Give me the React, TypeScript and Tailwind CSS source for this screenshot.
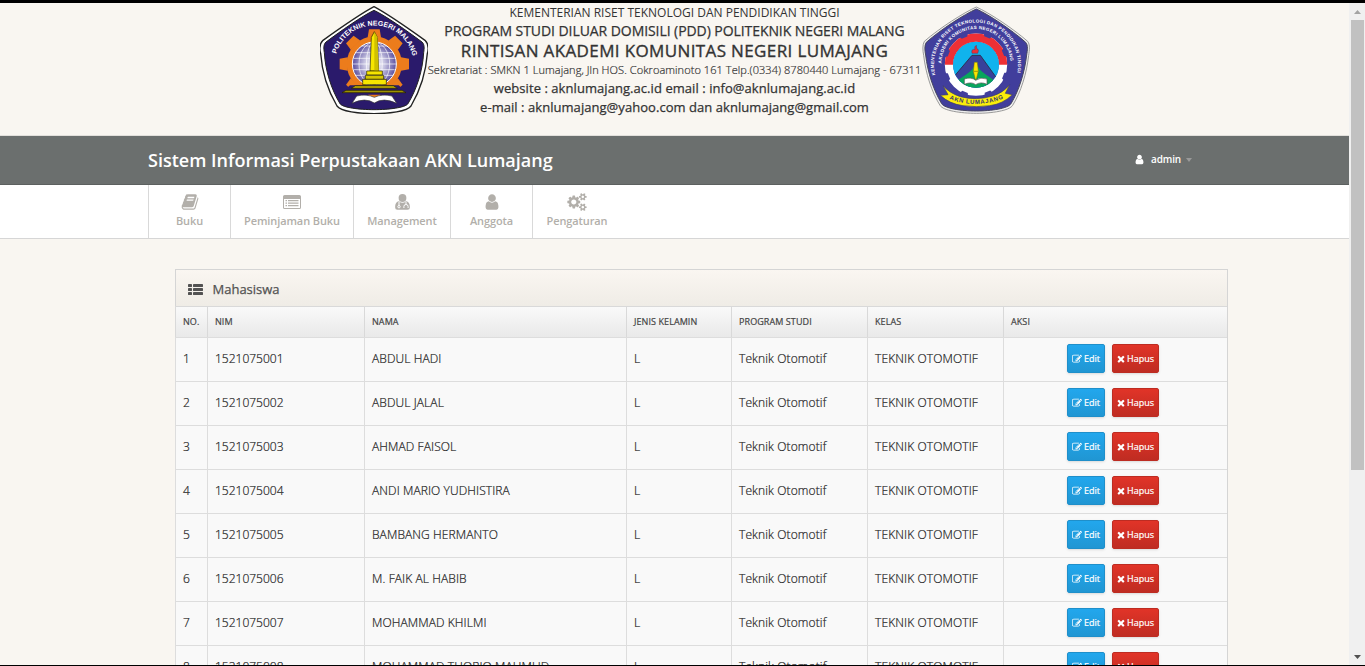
import React from "react";

const toothAngles = [0, 45, 90, 135, 180, 225, 270, 315];

function Glyph({ d, box = "0 0 1792 1792", className }: { d: string; box?: string; className: string }) {
  return (
    <svg viewBox={box} className={className} fill="currentColor" aria-hidden="true">
      <path d={d} />
    </svg>
  );
}

const BOOK =
  "M1703 478q40 57 18 129l-275 906q-19 64-76.5 107.5t-122.5 43.5h-923q-77 0-148.5-53.5t-99.5-131.5q-24-67-2-127 0-4 3-27t4-37q1-8-3-21.5t-3-19.5q2-11 8-21t16.5-23.5 16.5-23.5q23-38 45-91.5t30-91.5q3-10 .5-30t-.5-28q3-11 17-28t17-23q21-36 42-92t25-90q1-9-2.5-32t.5-28q4-13 22-30.5t22-22.5q19-26 42.5-84.5t27.5-96.5q1-8-3-25.5t-2-26.5q2-8 9-18t18-23 17-21q8-12 16.5-30.5t15-35 16-36 19.5-32 26.5-23.5 36-11.5 47.5 5.5l-1 3q38-9 51-9h761q74 0 114 56t18 130l-274 906q-36 119-71.5 153.5t-128.5 34.5h-869q-27 0-38 15-11 16-1 43 24 70 144 70h923q29 0 56-15.5t35-41.5l300-987q7-22 5-57 38 15 59 43zm-1064 2q-4 13 2 22.5t20 9.5h608q13 0 25.5-9.5t16.5-22.5l21-64q4-13-2-22.5t-20-9.5h-608q-13 0-25.5 9.5t-16.5 22.5zm-83 256q-4 13 2 22.5t20 9.5h608q13 0 25.5-9.5t16.5-22.5l21-64q4-13-2-22.5t-20-9.5h-608q-13 0-25.5 9.5t-16.5 22.5z";
const USER =
  "M1536 1399q0 109-62.5 187t-150.5 78h-854q-88 0-150.5-78t-62.5-187q0-85 8.5-160.5t31.5-152 58.5-131 94-89 134.5-34.5q131 128 313 128t313-128q76 0 134.5 34.5t94 89 58.5 131 31.5 152 8.5 160.5zm-256-887q0 159-112.5 271.5t-271.5 112.5-271.5-112.5-112.5-271.5 112.5-271.5 271.5-112.5 271.5 112.5 112.5 271.5z";
const COGS =
  "M896 896q0-106-75-181t-181-75-181 75-75 181 75 181 181 75 181-75 75-181zm768 512q0-52-38-90t-90-38-90 38-38 90q0 53 37.5 90.5t90.5 37.5 90.5-37.5 37.5-90.5zm0-1024q0-52-38-90t-90-38-90 38-38 90q0 53 37.5 90.5t90.5 37.5 90.5-37.5 37.5-90.5zm-384 421v185q0 10-7 19.5t-16 10.5l-155 24q-11 35-32 76 34 48 90 115 7 11 7 20 0 12-7 19-23 30-82.5 89.5t-78.5 59.5q-11 0-21-7l-115-90q-37 19-77 31-11 108-23 155-7 24-30 24h-186q-11 0-20-7.5t-10-17.5l-23-153q-34-10-75-31l-118 89q-7 7-20 7-11 0-21-8-144-133-144-160 0-9 7-19 10-14 41-53t47-61q-23-44-35-82l-152-24q-10-1-17-9.5t-7-19.5v-185q0-10 7-19.5t16-10.5l155-24q11-35 32-76-34-48-90-115-7-11-7-20 0-12 7-20 22-30 82-89t79-59q11 0 21 7l115 90q34-18 77-32 11-108 23-154 7-24 30-24h186q11 0 20 7.5t10 17.5l23 153q34 10 75 31l118-89q8-7 20-7 11 0 21 8 144 133 144 160 0 8-7 19-12 16-42 54t-45 60q23 48 34 82l152 23q10 2 17 10.5t7 19.5zm640 533v140q0 16-149 31-12 27-30 52 51 113 51 138 0 4-4 7-122 71-124 71-8 0-46-47t-52-68q-20 2-30 2t-30-2q-14 21-52 68t-46 47q-2 0-124-71-4-3-4-7 0-25 51-138-18-25-30-52-149-15-149-31v-140q0-16 149-31 13-29 30-52-51-113-51-138 0-4 4-7 4-2 35-20t59-34 30-16q8 0 46 46.5t52 67.5q20-2 30-2t30 2q51-71 92-112l6-2q4 0 124 70 4 3 4 7 0 25-51 138 17 23 30 52 149 15 149 31zm0-1024v140q0 16-149 31-12 27-30 52 51 113 51 138 0 4-4 7-122 71-124 71-8 0-46-47t-52-68q-20 2-30 2t-30-2q-14 21-52 68t-46 47q-2 0-124-71-4-3-4-7 0-25 51-138-18-25-30-52-149-15-149-31v-140q0-16 149-31 13-29 30-52-51-113-51-138 0-4 4-7 4-2 35-20t59-34 30-16q8 0 46 46.5t52 67.5q20-2 30-2t30 2q51-71 92-112l6-2q4 0 124 70 4 3 4 7 0 25-51 138 17 23 30 52 149 15 149 31z";
const EDIT =
  "M888 1184l116-116-152-152-116 116v56h96v96h56zm440-720q-16-16-33 1l-350 350q-17 17-1 33t33-1l350-350q17-17 1-33zm80 594v190q0 119-84.5 203.5t-203.5 84.5h-832q-119 0-203.5-84.5t-84.5-203.5v-832q0-119 84.5-203.5t203.5-84.5h832q63 0 117 25 15 7 18 23 3 17-9 29l-49 49q-14 14-32 8-23-6-45-6h-832q-66 0-113 47t-47 113v832q0 66 47 113t113 47h832q66 0 113-47t47-113v-126q0-13 9-22l64-64q15-15 35-7t20 29zm-96-738l288 288-672 672h-288v-288zm444 132l-92 92-288-288 92-92q28-28 68-28t68 28l152 152q28 28 28 68t-28 68z";
const TIMES =
  "M1490 1322q0 40-28 68l-136 136q-28 28-68 28t-68-28l-294-294-294 294q-28 28-68 28t-68-28l-136-136q-28-28-28-68t28-68l294-294-294-294q-28-28-28-68t28-68l136-136q28-28 68-28t68 28l294 294 294-294q28-28 68-28t68 28l136 136q28 28 28 68t-28 68l-294 294 294 294q28 28 28 68z";

function ListAltIcon() {
  return (
    <svg viewBox="0 0 18 14" className="h-[14px] w-[18px]" aria-hidden="true">
      <path fill="currentColor" fillRule="evenodd" d="M1.600 0h14.800Q18 0 18 1.600v10.800q0 1.600-1.600 1.600H1.600Q0 14 0 12.400V1.600Q0 0 1.600 0ZM1 4v8.400q0 .6.6.6h14.800q.6 0 .6-.6V4Z" />
      <path fill="currentColor" d="M2.500 5h1.500v1.300H2.500zM2.500 7.500h1.500v1.300H2.500zM2.500 10h1.500v1.300H2.500zM5 5h10.500v1.300H5zM5 7.500h10.500v1.300H5zM5 10h10.500v1.300H5z" />
    </svg>
  );
}

function UserMdIcon() {
  return (
    <svg viewBox="0 0 15 16" className="h-[16px] w-[15px]" aria-hidden="true">
      <circle cx="7.500" cy="4" r="3.900" fill="currentColor" />
      <path fill="currentColor" d="M4 7.300q3.500 3 7 0 3.900.4 3.900 6 0 2.500-2.300 2.500H2.400Q.1 15.800.1 13.300q0-5.600 3.900-6Z" />
      <path fill="none" stroke="#fff" strokeWidth="1" d="M4 8v4M11 8v2.300M8.900 14v-1.600q0-1.900 2.100-1.900t2.100 1.900V14" />
      <circle cx="4" cy="12.700" r="1.200" fill="currentColor" stroke="#fff" strokeWidth="1" />
    </svg>
  );
}

function ThListIcon() {
  return (
    <svg viewBox="0 0 15 11" className="h-[11px] w-[15px]" fill="currentColor" aria-hidden="true">
      {[0, 4, 8].map((y) => (
        <g key={y}>
          <rect x="0" y={y} width="4" height="3" rx=".4" />
          <rect x="5" y={y} width="10" height="3" rx=".4" />
        </g>
      ))}
    </svg>
  );
}

function PolinemaLogo() {
  return (
    <svg viewBox="30 18 324 324" className="h-[108px] w-[108px] shrink-0">
      <defs>
        <path id="polinema-arc" d="M79 162A118 118 0 0 1 307 166" />
        <radialGradient id="globe">
          <stop offset="0" stopColor="#fff" />
          <stop offset=".45" stopColor="#c9c6e2" />
          <stop offset="1" stopColor="#5b50a0" />
        </radialGradient>
      </defs>
      <path
        d="M192 20C230 40 296 86 345 121C357 133 355 150 352 160C348 216 330 272 303 318C292 334 236 341 192 341C148 341 92 334 81 318C54 272 36 216 32 160C29 150 27 133 39 121C88 86 154 40 192 20Z"
        fill="#fff"
        stroke="#222"
        strokeWidth="4"
      />
      <path
        d="M192 31C228 48 290 92 336 126C344 134 343 144 341 158C338 212 320 268 294 311C286 323 236 329 192 329C148 329 98 323 90 311C64 268 46 212 43 158C41 144 40 134 48 126C94 92 156 48 192 31Z"
        fill="#2a1a6b"
        stroke="#222"
        strokeWidth="3"
      />
      <g fill="#ec7c1c">
        <circle cx="193" cy="192" r="83" />
        {toothAngles.map((a) => (
          <path key={a} d="M173 112L177 88H209L213 112Z" transform={`rotate(${a} 193 192)`} />
        ))}
      </g>
      <circle cx="193" cy="192" r="66" fill="url(#globe)" stroke="#fff" strokeWidth="3" />
      <g fill="none" stroke="#fff" strokeWidth="2">
        <ellipse cx="193" cy="192" rx="24" ry="65" />
        <ellipse cx="193" cy="192" rx="46" ry="65" />
        <path d="M127 192H259M137 158H249M137 226H249M155 138H231M132 175H254M132 209H254" />
      </g>
      <path d="M98 275L120 256H266L288 275L250 284H136Z" fill="#2a1a6b" />
      <g stroke="#242000" strokeWidth="2">
        <path d="M193 95L184 112L180 213H206L202 112Z" fill="#f7e600" />
        <path d="M193 95V213H206L202 112Z" fill="#cfc000" stroke="none" />
        <path d="M170 213H217V225H170Z" fill="#f7e600" />
        <path d="M166 226H221V238H166Z" fill="#d6c800" />
        <path d="M158 238H229V254H158Z" fill="#f7e600" />
        <path d="M136 257H250L262 265H124Z" fill="#b7a800" />
        <path d="M108 271H276L288 278H96Z" fill="#9c9100" />
      </g>
      <path d="M126 310L140 288Q170 281 193 292Q216 281 246 288L260 310Q220 291 193 309Q166 291 126 310Z" fill="#fff" stroke="#333" strokeWidth="2" />
      <text fill="#fff" fontFamily="Liberation Sans, sans-serif" fontWeight="700" fontSize="21">
        <textPath href="#polinema-arc">POLITEKNIK NEGERI MALANG</textPath>
      </text>
    </svg>
  );
}

function AknLogo() {
  return (
    <svg viewBox="21 18 324 324" className="h-[108px] w-[108px] shrink-0">
      <defs>
        <path id="akn-outer" d="M61 225A126 126 0 1 1 305 225" />
        <path id="akn-inner" d="M80 190A103 103 0 0 1 286 190" />
        <path id="akn-ribbon" d="M103 297Q184 328 266 295" />
        <clipPath id="akn-top">
          <path d="M80 90H288V194H80Z" />
        </clipPath>
        <clipPath id="akn-disc">
          <circle cx="183" cy="194" r="69" />
        </clipPath>
      </defs>
      <path
        d="M184 21C222 38 292 84 338 124C346 134 343 152 341 166C335 220 318 276 293 316C284 332 230 340 184 340C138 340 84 332 75 316C50 276 32 220 26 166C23 152 22 134 28 124C74 84 146 38 184 21Z"
        fill="#eee"
        stroke="#888"
        strokeWidth="2.500"
      />
      <path
        d="M184 27C220 43 288 88 332 127C340 136 337 152 335 165C329 217 312 272 288 311C280 325 229 333 184 333C139 333 88 325 80 311C56 272 38 217 32 165C29 152 28 136 34 127C78 88 148 43 184 27Z"
        fill="#413e9c"
        stroke="#46465e"
        strokeWidth="3"
      />
      {["#fff", "#ee3035"].map((color, i) => (
        <g key={color} clipPath={i === 1 ? "url(#akn-top)" : undefined}>
          <circle cx="183" cy="194" r="81" fill="none" stroke={color} strokeWidth="25" />
          {[22, 67, 112, 157, 202, 247, 292, 337].map((a) => (
            <path key={a} d="M170 97H196L192 106H174Z" fill="#413e9c" transform={`rotate(${a} 183 194)`} />
          ))}
        </g>
      ))}
      <g clipPath="url(#akn-disc)">
        <path d="M110 120H256V270H110Z" fill="#10b3ed" />
        <path d="M171 166H196L252 244V270H105V244Z" fill="#38419a" stroke="#2b3554" strokeWidth="3" />
        <path d="M183 183C190 222 229 226 250 255V270H116V255C137 226 176 222 183 183Z" fill="#08a65c" />
      </g>
      <path d="M171 160Q168 145 180 149Q177 139 184 136Q184 145 187 148Q193 147 188 160Z" fill="#ee3035" stroke="#5b315d" strokeWidth="1.500" />
      <path d="M148 237Q170 230 182 241Q196 230 216 237V253Q197 244 182 254Q170 244 148 253Z" fill="#fff" stroke="#555" strokeWidth="2" />
      <path d="M178 187H187L190 214L184 238H181L175 214Z" fill="#fbe500" stroke="#766e12" strokeWidth="1.500" />
      <path d="M176 214H189" stroke="#766e12" strokeWidth="2" />
      <path
        d="M84 257L99 284L76 286Q104 312 144 317Q184 323 224 317Q264 312 292 284L271 280L284 254Q265 278 233 288Q184 303 136 290Q103 279 84 257Z"
        fill="#fbed0a"
        stroke="#3d3b66"
        strokeWidth="2"
      />
      <g fontFamily="Liberation Sans, sans-serif" fontWeight="700">
        <text fill="#fff" fontSize="13.500" letterSpacing="1.100">
          <textPath href="#akn-outer">KEMENTERIAN RISET TEKNOLOGI DAN PENDIDIKAN TINGGI</textPath>
        </text>
        <text fill="#fff" fontSize="13.500" letterSpacing="1">
          <textPath href="#akn-inner">AKADEMI KOMUNITAS NEGERI LUMAJANG</textPath>
        </text>
        <text fill="#35356d" fontSize="18" letterSpacing="1.800">
          <textPath href="#akn-ribbon">AKN LUMAJANG</textPath>
        </text>
      </g>
    </svg>
  );
}

const navItems = [
  { label: "Buku", width: "w-[82px]", icon: <Glyph d={BOOK} className="size-[18px]" /> },
  { label: "Peminjaman Buku", width: "w-[123px]", icon: <ListAltIcon /> },
  { label: "Management", width: "w-[97px]", icon: <UserMdIcon /> },
  { label: "Anggota", width: "w-[82px]", icon: <Glyph d={USER} className="size-[18px]" /> },
  { label: "Pengaturan", width: "w-[89px]", icon: <Glyph d={COGS} box="0 0 1920 1792" className="h-[18px] w-[20px]" /> },
];

const columns = [
  { title: "NO.", width: "w-[32px]" },
  { title: "NIM", width: "w-[157px]" },
  { title: "NAMA", width: "w-[262px]" },
  { title: "JENIS KELAMIN", width: "w-[105px]" },
  { title: "PROGRAM STUDI", width: "w-[136px]" },
  { title: "KELAS", width: "w-[136px]" },
  { title: "AKSI", width: "w-[224px]" },
];

const students = [
  "ABDUL HADI",
  "ABDUL JALAL",
  "AHMAD FAISOL",
  "ANDI MARIO YUDHISTIRA",
  "BAMBANG HERMANTO",
  "M. FAIK AL HABIB",
  "MOHAMMAD KHILMI",
  "MOHAMMAD THORIQ MAHMUD",
];

function Letterhead() {
  return (
    <header className="flex h-[132px] shrink-0 justify-center pt-[3px]">
      <PolinemaLogo />
      <div className="-mt-px flex w-[494px] flex-col items-center whitespace-nowrap text-[#333]">
        <div className="h-[17px] text-[12px] leading-[15px]">KEMENTERIAN RISET TEKNOLOGI DAN PENDIDIKAN TINGGI</div>
        <div className="h-[19px] text-[14px] leading-[17px] tracking-[-0.07px] [-webkit-text-stroke:0.25px]">PROGRAM STUDI DILUAR DOMISILI (PDD) POLITEKNIK NEGERI MALANG</div>
        <div className="h-[20px] text-[17px] leading-[19px] tracking-[0.37px] [-webkit-text-stroke:0.35px]">RINTISAN AKADEMI KOMUNITAS NEGERI LUMAJANG</div>
        <div className="h-[18px] text-[11px] font-light leading-[18px] tracking-[0.065px] [-webkit-text-stroke:0.2px]">
          Sekretariat : SMKN 1 Lumajang, Jln HOS. Cokroaminoto 161 Telp.(0334) 8780440 Lumajang - 67311
        </div>
        <div className="h-[19px] text-[13px] leading-[19px] tracking-[0.06px] [-webkit-text-stroke:0.25px]">website : aknlumajang.ac.id email : info@aknlumajang.ac.id</div>
        <div className="h-[19px] text-[13px] leading-[19px] tracking-[0.05px] [-webkit-text-stroke:0.25px]">e-mail : aknlumajang@yahoo.com dan aknlumajang@gmail.com</div>
      </div>
      <AknLogo />
    </header>
  );
}

function StudentTable() {
  return (
    <section className="ml-[175px] mt-[30px] w-[1053px] border border-[#d5d5d5] bg-[#f9f9f9]">
      <h3 className="flex h-[36px] items-center gap-[10px] bg-linear-to-b from-[#faf6f1] to-[#efece6] pl-[11.5px] pt-[3px] text-[13px] text-[#525252] [-webkit-text-stroke:0.25px]">
        <ThListIcon />
        <span>Mahasiswa</span>
      </h3>
      <table className="-ml-px w-[1052px] table-fixed border-separate border-spacing-0 text-left">
        <thead>
          <tr className="h-[31px] bg-linear-to-b from-[#fafafa] to-[#e9e9e9]">
            {columns.map((c) => (
              <th key={c.title} className={`${c.width} border-l border-t border-[#d9d9d9] p-0 pl-[7px] text-[9px] font-normal tracking-[0.08px] text-[#444] [-webkit-text-stroke:0.2px]`}>
                {c.title}
              </th>
            ))}
          </tr>
        </thead>
        <tbody>
          {students.map((name, i) => (
            <tr key={name} className="h-[44px] text-[12px] font-light text-[#222] [&>td]:border-l [&>td]:border-t [&>td]:border-[#dddddd] [&>td]:p-0 [&>td]:pb-[2px] [&>td]:pl-[7px]">
              <td className="[-webkit-text-stroke:0.2px]">{i + 1}</td>
              <td className="[-webkit-text-stroke:0.2px]">{1521075001 + i}</td>
              <td className="tracking-[0.1px] [-webkit-text-stroke:0.2px]">{name}</td>
              <td className="[-webkit-text-stroke:0.2px]">L</td>
              <td className="tracking-[0.12px] [-webkit-text-stroke:0.2px]">Teknik Otomotif</td>
              <td className="tracking-[0.12px] [-webkit-text-stroke:0.2px]">TEKNIK OTOMOTIF</td>
              <td>
                <div className="flex gap-[7px] pl-[56px] text-[9px] font-normal text-white [-webkit-text-stroke:0.2px]">
                  <button className="flex h-[29px] w-[38px] items-center justify-center gap-[2px] rounded-[2px] border border-[#1f8fca] bg-linear-to-b from-[#22a7ed] to-[#2096d3] shadow-sm">
                    <Glyph d={EDIT} className="size-[10px]" />
                    Edit
                  </button>
                  <button className="flex h-[29px] w-[47px] items-center justify-center gap-[2px] rounded-[2px] border border-[#bd2c22] bg-linear-to-b from-[#e13428] to-[#bf2c22] shadow-sm">
                    <Glyph d={TIMES} box="200 220 1392 1392" className="size-[8px]" />
                    Hapus
                  </button>
                </div>
              </td>
            </tr>
          ))}
        </tbody>
      </table>
    </section>
  );
}

export default function App() {
  return (
    <div className="flex h-[666px] w-[1365px] flex-col overflow-hidden border-b border-t-[3px] border-black bg-[#f9f6f1] font-['Open_Sans',sans-serif]">
      <div className="flex min-h-0 flex-1">
        <main className="flex w-[1349px] flex-col overflow-hidden">
          <Letterhead />
          <div className="flex h-[50px] shrink-0 items-center justify-between border-b border-t border-b-[#5c605f] border-t-[#e2e0dc] bg-[#6b6f6e] pl-[148px] pr-[157px] text-white">
            <h1 className="text-[18px] font-semibold">Sistem Informasi Perpustakaan AKN Lumajang</h1>
            <button className="flex items-center pb-px text-[10px] font-semibold tracking-[-0.15px]">
              <Glyph d={USER} className="mr-[6px] size-[11px]" />
              admin
              <span className="ml-[5px] border-x-[3.500px] border-t-[4px] border-x-transparent border-t-[#999]" />
            </button>
          </div>
          <nav className="flex h-[54px] shrink-0 border-b border-[#d6d6d6] bg-white pl-[148px] text-[#b2afaa]">
            {navItems.map((item) => (
              <a key={item.label} className={`${item.width} flex flex-col items-center border-l border-[#d9d9d9] pt-[8px] text-[11px] font-semibold tracking-[-0.1px]`}>
                <span className="-mt-px mb-px flex h-[20px] items-center">{item.icon}</span>
                <span className="leading-[16px]">{item.label}</span>
              </a>
            ))}
          </nav>
          <StudentTable />
        </main>
        <aside className="flex w-[16px] flex-col items-center bg-[#f0f0f0]">
          <div className="flex h-[17px] items-center">
            <svg viewBox="0 0 7 4" className="h-[4px] w-[7px]" fill="#a3a3a3"><path d="M0 4L3.500 0L7 4Z" /></svg>
          </div>
          <div className="h-[450px] w-[13px] bg-[#c1c1c1]" />
          <div className="mt-auto flex h-[17px] items-center">
            <svg viewBox="0 0 7 4" className="h-[4px] w-[7px]" fill="#505050"><path d="M0 0L3.500 4L7 0Z" /></svg>
          </div>
        </aside>
      </div>
    </div>
  );
}
